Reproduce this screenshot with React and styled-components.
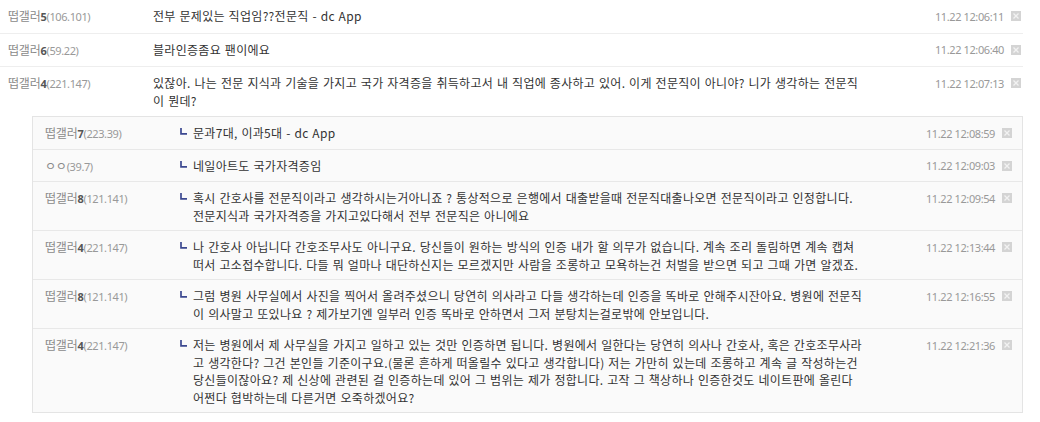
import React from "react";
import styled, { createGlobalStyle } from "styled-components";

const comments = [
  {
    id: 1,
    nick: "떱갤러",
    num: "5",
    ip: "106.101",
    lines: ["전부 문제있는 직업임??전문직 - dc App"],
    time: "11.22 12:06:11",
  },
  {
    id: 2,
    nick: "떱갤러",
    num: "6",
    ip: "59.22",
    lines: ["블라인증좀요 팬이에요"],
    time: "11.22 12:06:40",
  },
  {
    id: 3,
    nick: "떱갤러",
    num: "4",
    ip: "221.147",
    lines: [
      "있잖아. 나는 전문 지식과 기술을 가지고 국가 자격증을 취득하고서 내 직업에 종사하고 있어. 이게 전문직이 아니야? 니가 생각하는 전문직",
      "이 뭔데?",
    ],
    time: "11.22 12:07:13",
    replies: [
      {
        id: 31,
        nick: "떱갤러",
        num: "7",
        ip: "223.39",
        lines: ["문과7대, 이과5대 - dc App"],
        time: "11.22 12:08:59",
      },
      {
        id: 32,
        nick: "ㅇㅇ",
        num: "",
        ip: "39.7",
        lines: ["네일아트도 국가자격증임"],
        time: "11.22 12:09:03",
      },
      {
        id: 33,
        nick: "떱갤러",
        num: "8",
        ip: "121.141",
        lines: [
          "혹시 간호사를 전문직이라고 생각하시는거아니죠 ? 통상적으로 은행에서 대출받을때 전문직대출나오면 전문직이라고 인정합니다.",
          "전문지식과 국가자격증을 가지고있다해서 전부 전문직은 아니에요",
        ],
        time: "11.22 12:09:54",
      },
      {
        id: 34,
        nick: "떱갤러",
        num: "4",
        ip: "221.147",
        lines: [
          "나 간호사 아닙니다 간호조무사도 아니구요. 당신들이 원하는 방식의 인증 내가 할 의무가 없습니다. 계속 조리 돌림하면 계속 캡쳐",
          "떠서 고소접수합니다. 다들 뭐 얼마나 대단하신지는 모르겠지만 사람을 조롱하고 모욕하는건 처벌을 받으면 되고 그때 가면 알겠죠.",
        ],
        time: "11.22 12:13:44",
      },
      {
        id: 35,
        nick: "떱갤러",
        num: "8",
        ip: "121.141",
        lines: [
          "그럼 병원 사무실에서 사진을 찍어서 올려주셨으니 당연히 의사라고 다들 생각하는데 인증을 똑바로 안해주시잔아요. 병원에 전문직",
          "이 의사말고 또있나요 ? 제가보기엔 일부러 인증 똑바로 안하면서 그저 분탕치는걸로밖에 안보입니다.",
        ],
        time: "11.22 12:16:55",
      },
      {
        id: 36,
        nick: "떱갤러",
        num: "4",
        ip: "221.147",
        lines: [
          "저는 병원에서 제 사무실을 가지고 일하고 있는 것만 인증하면 됩니다. 병원에서 일한다는 당연히 의사나 간호사, 혹은 간호조무사라",
          "고 생각한다? 그건 본인들 기준이구요.(물론 흔하게 떠올릴수 있다고 생각합니다) 저는 가만히 있는데 조롱하고 계속 글 작성하는건",
          "당신들이잖아요? 제 신상에 관련된 걸 인증하는데 있어 그 범위는 제가 정합니다. 고작 그 책상하나 인증한것도 네이트판에 올린다",
          "어쩐다 협박하는데 다른거면 오죽하겠어요?",
        ],
        time: "11.22 12:21:36",
      },
    ],
  },
];

const GlobalStyle = createGlobalStyle`
  body {
    margin: 0;
    background: #fff;
    font-family: "Noto Sans CJK KR", "Noto Sans", sans-serif;
  }
  ul {
    margin: 0;
    padding: 0;
    list-style: none;
  }
`;

const ReplyMark = () => (
  <svg width="7" height="7" viewBox="0 0 7 7">
    <path d="M1 0 V5.8 H7" fill="none" stroke="#3b4890" strokeWidth="1.7" />
  </svg>
);

const DeleteIcon = () => (
  <svg width="10" height="10" viewBox="0 0 10 10">
    <rect width="10" height="10" fill="#d4d4d4" />
    <path
      d="M2.5 2.5 L7.5 7.5 M7.5 2.5 L2.5 7.5"
      stroke="#f2f2f2"
      strokeWidth="1.3"
    />
  </svg>
);

const Writer = ({ nick, num, ip }) => (
  <>
    {nick}
    {num && <NickNum>{num}</NickNum>}
    <Ip>({ip})</Ip>
  </>
);

const Text = ({ lines }) =>
  lines.map((line, i) => (
    <React.Fragment key={i}>
      {i > 0 && <br />}
      {line}
    </React.Fragment>
  ));

const App = () => {
  return (
    <>
      <GlobalStyle />
      <CommentList>
        {comments.map((c) => (
          <li key={c.id}>
            <CommentRow $hasReplies={!!c.replies}>
              <Nick $width={145}>
                <Writer nick={c.nick} num={c.num} ip={c.ip} />
              </Nick>
              <Content>
                <Text lines={c.lines} />
              </Content>
              <Meta>
                <Time>{c.time}</Time>
                <DeleteButton type="button">
                  <DeleteIcon />
                </DeleteButton>
              </Meta>
            </CommentRow>
            {c.replies && (
              <ReplyBox>
                {c.replies.map((r) => (
                  <ReplyRow key={r.id}>
                    <Nick $width={133}>
                      <Writer nick={r.nick} num={r.num} ip={r.ip} />
                    </Nick>
                    <Arrow>
                      <ReplyMark />
                    </Arrow>
                    <Content>
                      <Text lines={r.lines} />
                    </Content>
                    <Meta>
                      <Time>{r.time}</Time>
                      <DeleteButton type="button">
                        <DeleteIcon />
                      </DeleteButton>
                    </Meta>
                  </ReplyRow>
                ))}
              </ReplyBox>
            )}
          </li>
        ))}
      </CommentList>
    </>
  );
};

export default App;

const CommentList = styled.ul`
  width: 1023px;
`;

const CommentRow = styled.div`
  display: flex;
  align-items: flex-start;
  padding: 7px 2px 7px 8px;
  border-bottom: ${(props) => (props.$hasReplies ? "none" : "1px solid #eeeeee")};
`;

const ReplyBox = styled.ul`
  margin-left: 32px;
  background-color: #fafafa;
  border: 1px solid #e4e4e4;
`;

const ReplyRow = styled.li`
  display: flex;
  align-items: flex-start;
  padding: 7px 10px 6px 12px;
  border-bottom: 1px solid #e8e8e8;

  &:last-child {
    border-bottom: none;
  }
`;

const Nick = styled.div`
  width: ${(props) => props.$width}px;
  flex-shrink: 0;
  font-size: 12px;
  line-height: 17.5px;
  color: #8a8a8a;
  letter-spacing: -0.2px;
  white-space: nowrap;
`;

const NickNum = styled.b`
  color: #555;
  font-family: "Noto Sans", sans-serif;
  font-size: 11px;
  letter-spacing: -0.3px;
`;

const Ip = styled.span`
  color: #999;
  font-family: "Noto Sans", sans-serif;
  font-size: 11px;
  letter-spacing: -0.4px;
`;

const Arrow = styled.span`
  width: 15px;
  flex-shrink: 0;
  display: flex;
  padding-top: 4px;
  padding-left: 2px;
  box-sizing: border-box;
`;

const Content = styled.div`
  flex: 1;
  min-width: 0;
  font-size: 12px;
  line-height: 17.5px;
  color: #333;
  letter-spacing: 0.3px;
  word-spacing: 0.8px;
  white-space: nowrap;
`;

const Meta = styled.div`
  display: flex;
  align-items: center;
  gap: 7px;
  height: 18px;
  flex-shrink: 0;
  margin-left: 12px;
`;

const Time = styled.span`
  font-family: "Noto Sans", sans-serif;
  font-size: 11px;
  color: #999;
  letter-spacing: -0.4px;
`;

const DeleteButton = styled.button`
  display: flex;
  padding: 0;
  border: 0;
  background: none;
  cursor: pointer;
`;
